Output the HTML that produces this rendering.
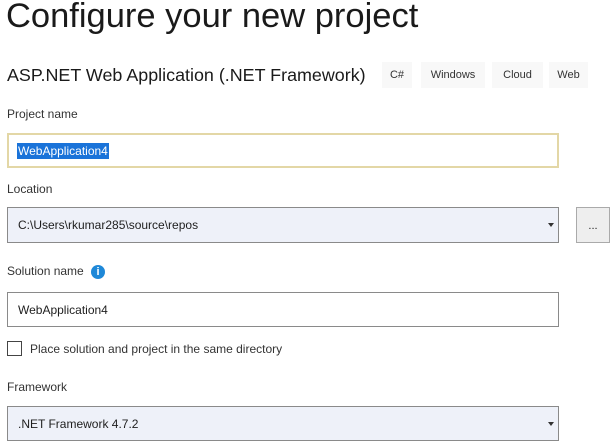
<!DOCTYPE html>
<html><head><style>
body{margin:0;width:612px;height:445px;background:#fff;font-family:"Liberation Sans",sans-serif;color:#1e1e1e;position:relative;overflow:hidden}
.a{position:absolute;white-space:nowrap}
.lbl{font-size:12px;color:#333}
.box{position:absolute;left:7px;width:552px;box-sizing:border-box;border:1px solid #8a8a8a;font-size:12px;padding-left:10px;display:flex;align-items:center}
.tag{position:absolute;top:62px;height:26px;background:#f8f8f8;font-size:11px;color:#333;display:flex;align-items:center;justify-content:center}
.arr{position:absolute;right:4px;top:50%;margin-top:-2px;border-left:3px solid transparent;border-right:3px solid transparent;border-top:4px solid #333}
</style></head><body>
<div class="a" style="left:6px;top:-3px;font-size:34.5px;color:#1a1a1a">Configure your new project</div>
<div class="a" style="left:7px;top:65px;font-size:17.9px;color:#1a1a1a">ASP.NET Web Application (.NET Framework)</div>
<div class="tag" style="left:382px;width:30px">C#</div>
<div class="tag" style="left:421px;width:64px">Windows</div>
<div class="tag" style="left:492px;width:51px">Cloud</div>
<div class="tag" style="left:549px;width:39px">Web</div>
<div class="a lbl" style="left:7px;top:107px">Project name</div>
<div class="box" style="top:133px;height:35px;border:2px solid #e3d7a6;padding-left:8px"><span style="background:#1a73d9;color:#fff;padding:1px 1px">WebApplication4</span></div>
<div class="a lbl" style="left:7px;top:182px">Location</div>
<div class="box" style="top:207px;height:36px;background:#eef1f9">C:\Users\rkumar285\source\repos<div class="arr"></div></div>
<div class="a" style="left:576px;top:207px;width:34px;height:36px;box-sizing:border-box;border:1px solid #aaa;background:#eee;font-size:11px;text-align:center;line-height:36px">...</div>
<div class="a lbl" style="left:7px;top:264px">Solution name</div>
<div class="a" style="left:91px;top:265px;width:14px;height:14px;border-radius:50%;background:#1e88d8;color:#fff;font-size:11px;font-weight:bold;text-align:center;line-height:14px">i</div>
<div class="box" style="top:292px;height:35px">WebApplication4</div>
<div class="a" style="left:7px;top:341px;width:15px;height:15px;box-sizing:border-box;border:1px solid #444"></div>
<div class="a lbl" style="left:30px;top:342px">Place solution and project in the same directory</div>
<div class="a lbl" style="left:7px;top:380px">Framework</div>
<div class="box" style="top:406px;height:35px;background:#eef1f9">.NET Framework 4.7.2<div class="arr"></div></div>
</body></html>
